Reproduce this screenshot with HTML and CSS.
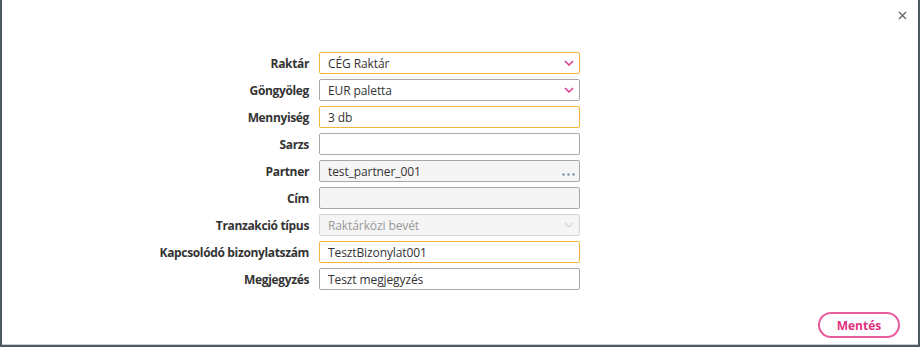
FILE: index.html
```html
<!DOCTYPE html>
<html lang="hu">
<head>
  <meta charset="UTF-8">
  <title>Készletmozgás</title>
  <link rel="stylesheet" href="styles.css">
</head>
<body>
  <div class="dialog">
    <div class="dialog-header">
      <button class="close" type="button" aria-label="Bezárás">
        <svg width="9" height="9" viewBox="0 0 9 9"><path d="M1 1L8 8M8 1L1 8" stroke="#666" stroke-width="1.3" fill="none"/></svg>
      </button>
    </div>
    <form class="form">
      <label class="label">Raktár</label>
      <div class="field active">
        <span class="value">CÉG Raktár</span>
        <svg class="chev" width="10" height="6" viewBox="0 0 10 6"><path d="M1 1L5 5L9 1" stroke="#e0388a" stroke-width="1.5" fill="none"/></svg>
      </div>

      <label class="label">Göngyöleg</label>
      <div class="field">
        <span class="value">EUR paletta</span>
        <svg class="chev" width="10" height="6" viewBox="0 0 10 6"><path d="M1 1L5 5L9 1" stroke="#e0388a" stroke-width="1.5" fill="none"/></svg>
      </div>

      <label class="label">Mennyiség</label>
      <div class="field active"><span class="value">3 db</span></div>

      <label class="label">Sarzs</label>
      <div class="field"><span class="value"></span></div>

      <label class="label">Partner</label>
      <div class="field readonly">
        <span class="value">test_partner_001</span>
        <svg class="dots" width="13" height="3" viewBox="0 0 13 3"><circle cx="1.5" cy="1.5" r="1.2" fill="#7a8fa8"/><circle cx="6.5" cy="1.5" r="1.2" fill="#7a8fa8"/><circle cx="11.5" cy="1.5" r="1.2" fill="#7a8fa8"/></svg>
      </div>

      <label class="label">Cím</label>
      <div class="field readonly"><span class="value"></span></div>

      <label class="label">Tranzakció típus</label>
      <div class="field disabled">
        <span class="value">Raktárközi bevét</span>
        <svg class="chev" width="10" height="6" viewBox="0 0 10 6"><path d="M1 1L5 5L9 1" stroke="#d4d4d4" stroke-width="1.2" fill="none"/></svg>
      </div>

      <label class="label">Kapcsolódó bizonylatszám</label>
      <div class="field active"><span class="value">TesztBizonylat001</span></div>

      <label class="label">Megjegyzés</label>
      <div class="field"><span class="value">Teszt megjegyzés</span></div>
    </form>
    <div class="dialog-footer">
      <button class="save" type="button">Mentés</button>
    </div>
  </div>
</body>
</html>
```

FILE: styles.css
```css
body {
  margin: 0;
  font-family: "Open Sans", Arial, sans-serif;
  color: #333;
  background: #fff;
}
.dialog {
  width: 920px;
  height: 347px;
  box-sizing: border-box;
  border-left: 2px solid #4d5b61;
  border-right: 2px solid #4d5b61;
  border-bottom: 2px solid #4d5b61;
  box-shadow: inset 0 -1px 0 #c9d0d3;
  display: flex;
  flex-direction: column;
}
.dialog-header {
  height: 52px;
  display: flex;
  justify-content: flex-end;
  align-items: flex-start;
}
.close {
  margin: 9px 10px 0 0;
  width: 12px;
  height: 12px;
  padding: 0;
  border: none;
  background: none;
  display: flex;
  align-items: center;
  justify-content: center;
  cursor: pointer;
}
.form {
  display: grid;
  grid-template-columns: 307px 261px;
  column-gap: 10px;
  row-gap: 5px;
  grid-auto-rows: 22px;
}
.label {
  font-size: 12px;
  font-weight: 700;
  letter-spacing: -0.35px;
  text-align: right;
  align-self: center;
  color: #333;
}
.field {
  box-sizing: border-box;
  border: 1px solid #a8a8a8;
  border-radius: 2px;
  background: #fff;
  display: flex;
  align-items: center;
  padding: 0 3px 0 8px;
  font-size: 12px;
  letter-spacing: -0.1px;
}
.field.active {
  border-color: #f6b63c;
}
.field.readonly {
  background: #f5f5f5;
}
.field.disabled {
  background: #f5f5f5;
  border-color: #d3d3d3;
  color: #999;
}
.value {
  flex: 1;
  white-space: nowrap;
}
.chev {
  margin-right: 2px;
}
.dots {
  margin: 6px 1px 0 0;
  align-self: center;
}
.dialog-footer {
  margin-top: auto;
  display: flex;
  justify-content: flex-end;
  padding: 0 18px 7px 0;
}
.save {
  width: 82px;
  height: 26px;
  border: 2px solid #ea5b9d;
  border-radius: 13px;
  background: #fff;
  color: #e2317f;
  font-family: "Open Sans", Arial, sans-serif;
  font-size: 12px;
  font-weight: 700;
  cursor: pointer;
}
```
